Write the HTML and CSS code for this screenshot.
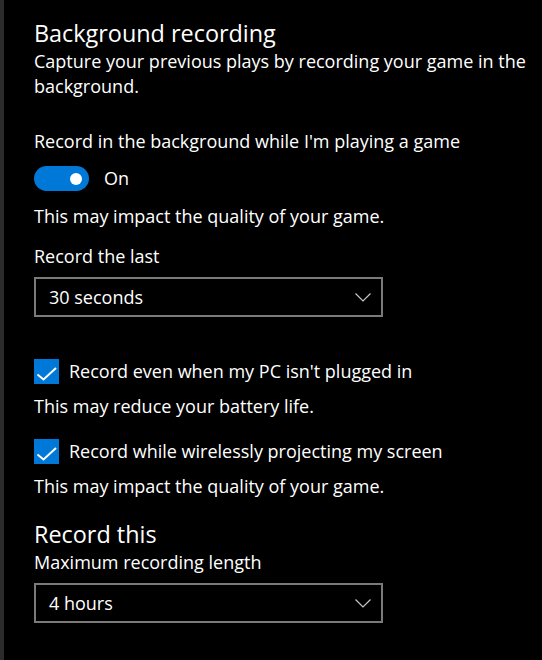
FILE: index.html
```html
<!DOCTYPE html>
<html lang="en">
<head>
  <meta charset="UTF-8" />
  <title>Captures</title>
  <link rel="stylesheet" href="styles.css">
</head>
<body>
  <main class="panel">
    <h2 class="section-title">Background recording</h2>
    <p class="desc">Capture your previous plays by recording your game in the background.</p>

    <p class="label label-toggle">Record in the background while I'm playing a game</p>
    <div class="toggle-row">
      <span class="toggle"><span class="knob"></span></span>
      <span class="toggle-text">On</span>
    </div>
    <p class="note note-toggle">This may impact the quality of your game.</p>

    <p class="label label-select">Record the last</p>
    <div class="select">
      <span>30 seconds</span>
      <svg class="chevron" width="16" height="9" viewBox="0 0 16 9"><polyline points="0.5,0.5 8,8 15.5,0.5" fill="none" stroke="#c8c8c8" stroke-width="1.2"/></svg>
    </div>

    <div class="check-row first">
      <span class="checkbox">
        <svg width="25" height="25" viewBox="0 0 25 25"><polyline points="3.5,15.5 9.5,20.5 22,9" fill="none" stroke="#fff" stroke-width="2"/></svg>
      </span>
      <span>Record even when my PC isn't plugged in</span>
    </div>
    <p class="note">This may reduce your battery life.</p>

    <div class="check-row">
      <span class="checkbox">
        <svg width="25" height="25" viewBox="0 0 25 25"><polyline points="3.5,15.5 9.5,20.5 22,9" fill="none" stroke="#fff" stroke-width="2"/></svg>
      </span>
      <span>Record while wirelessly projecting my screen</span>
    </div>
    <p class="note">This may impact the quality of your game.</p>

    <h2 class="section-title second">Record this</h2>
    <p class="label">Maximum recording length</p>
    <div class="select">
      <span>4 hours</span>
      <svg class="chevron" width="16" height="9" viewBox="0 0 16 9"><polyline points="0.5,0.5 8,8 15.5,0.5" fill="none" stroke="#c8c8c8" stroke-width="1.2"/></svg>
    </div>
  </main>
</body>
</html>
```

FILE: styles.css
```css
* {
  margin: 0;
  padding: 0;
  box-sizing: border-box;
}

body {
  background: #000;
  color: #fff;
  font-family: 'Open Sans', 'Noto Sans', sans-serif;
  font-size: 18px;
  line-height: 25px;
}

/* Settings panel */
.panel {
  min-height: 660px;
  border-left: 4px solid #2b2b2b;
  padding: 17px 0 0 30px;
  display: flex;
  flex-direction: column;
  align-items: flex-start;
}

.section-title {
  font-size: 23.4px;
  font-weight: 400;
  line-height: 32px;
}
.section-title.second { margin-top: 19px; }

.desc { width: 500px; }

.label-toggle { margin-top: 30px; }
.label-select { margin-top: 15px; }

.note { margin-top: 10px; }
.note-toggle { margin-top: 13px; }

/* Toggle switch */
.toggle-row {
  display: flex;
  align-items: center;
  gap: 15px;
  margin-top: 12px;
  height: 25px;
}
.toggle {
  width: 55px;
  height: 25px;
  border-radius: 13px;
  background: #0078d7;
  display: flex;
  align-items: center;
  justify-content: flex-end;
  padding-right: 7px;
}
.knob {
  width: 12px;
  height: 12px;
  border-radius: 50%;
  background: #fff;
}

/* Dropdowns */
.select {
  margin-top: 8px;
  width: 349px;
  height: 40px;
  border: 2px solid #7a7a7a;
  display: flex;
  align-items: center;
  justify-content: space-between;
  padding: 0 10px 0 13px;
}

/* Checkboxes */
.check-row {
  display: flex;
  align-items: center;
  gap: 10px;
  margin-top: 20px;
  height: 25px;
}
.check-row.first { margin-top: 42px; }
.checkbox {
  width: 25px;
  height: 25px;
  background: #0078d7;
  display: block;
}
.checkbox svg { display: block; }
```
